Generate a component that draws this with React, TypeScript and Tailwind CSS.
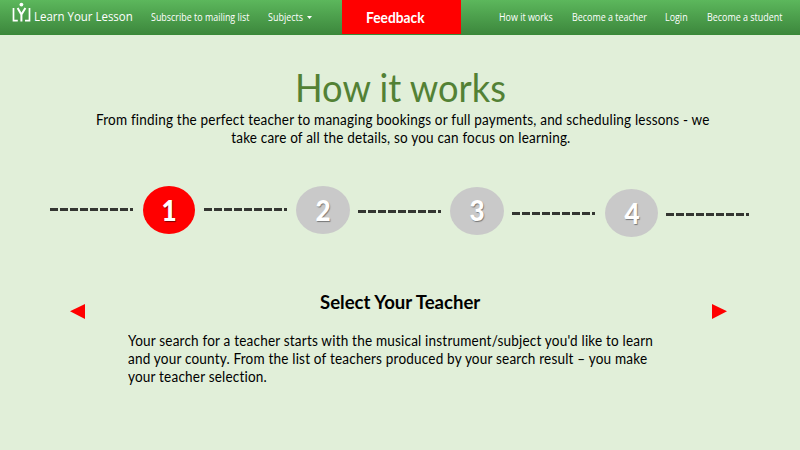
import React from "react";

const lato = "font-['Lato','Liberation_Sans',sans-serif]";

function Logo() {
  return (
    <svg className="h-[24px] w-[20px] shrink-0" viewBox="0 0 20 24" fill="none" stroke="white">
      <path d="M2.500 8V20.700H6.800" strokeWidth="1.700" />
      <path d="M18.500 8V20.700H14" strokeWidth="1.700" />
      <path d="M6.600 8L10.400 14.500L14.400 8M10.400 14V21.500" strokeWidth="2" />
      <circle cx="10.400" cy="4.600" r="1.900" fill="white" stroke="none" />
    </svg>
  );
}

function Dashes({ className }: { className: string }) {
  return (
    <div className={`flex h-[3px] w-[84px] shrink-0 gap-[2px] ${className}`}>
      {Array.from({ length: 8 }, (_, i) => (
        <span key={i} className="h-[3px] w-[8px] shrink-0 bg-[#343632]" />
      ))}
      <span className="h-[3px] w-[3px] shrink-0 bg-[#343632]" />
    </div>
  );
}

function Step({ n, className }: { n: number; className: string }) {
  return (
    <div className={`flex h-[48px] shrink-0 items-center justify-center rounded-[50%] pt-px text-[27.500px] leading-none font-black text-white ${className}`}>
      <span className="scale-x-[0.95]">{n}</span>
    </div>
  );
}

export default function App() {
  return (
    <div className={`h-[450px] w-[800px] overflow-hidden bg-[#e1efd9] text-black [font-variant-ligatures:none] ${lato}`}>
      <nav className="flex h-[35px] items-start border-b border-[#398a39] bg-linear-to-b from-[#5cb75c] to-[#3d883d] font-['Open_Sans','Noto_Sans',sans-serif] text-[10.500px] leading-[14px] whitespace-nowrap text-white">
        <div className="ml-[11px] flex w-[140px] gap-[3px]">
          <Logo />
          <span className="mt-[9px] w-[107px] origin-left scale-x-[0.917] text-[12.500px] leading-[16px]">Learn Your Lesson</span>
        </div>
        <span className="mt-[10px] w-[117px]"><span className="inline-block origin-left scale-x-[0.85]">Subscribe to mailing list</span></span>
        <span className="mt-[10px] flex w-[74px] items-center gap-[3px]">
          <span className="w-[36px]"><span className="inline-block origin-left scale-x-[0.856]">Subjects</span></span>
          <svg className="mt-[1px] h-[3px] w-[5px]" viewBox="0 0 5 3"><path d="M0 0H5L2.500 3Z" fill="white" /></svg>
        </span>
        <div className={`h-[34px] w-[119px] bg-[#ff0000] pt-[10px] pl-[24px] text-[14.500px] leading-[16px] font-bold ${lato}`}>
          <span className="inline-block origin-left scale-x-[0.95]">Feedback</span>
        </div>
        <span className="mt-[10px] ml-[38px] w-[73px]"><span className="inline-block origin-left scale-x-[0.85]">How it works</span></span>
        <span className="mt-[10px] w-[93px]"><span className="inline-block origin-left scale-x-[0.85]">Become a teacher</span></span>
        <span className="mt-[10px] w-[42px]"><span className="inline-block origin-left scale-x-[0.85]">Login</span></span>
        <span className="mt-[10px]"><span className="inline-block origin-left scale-x-[0.85]">Become a student</span></span>
      </nav>

      <header className="flex flex-col items-center pt-[30px] whitespace-nowrap">
        <h1 className="scale-x-[0.955] text-[38px] leading-[44px] text-[#538135]">How it works</h1>
        <p className="mt-[2px] ml-[6px] flex flex-col items-center text-[14.500px] leading-[18px] tracking-[0.2px]">
          <span className="scale-x-[0.933]">From finding the perfect teacher to managing bookings or full payments, and scheduling lessons - we</span>
          <span className="-ml-[4px] scale-x-[0.933]">take care of all the details, so you can focus on learning.</span>
        </p>
      </header>

      <div className="mt-[39px] ml-[49.500px] flex items-start">
        <Dashes className="mt-[22px]" />
        <Step n={1} className="ml-[9px] w-[52px] bg-[#ff0000] [text-shadow:1px_1px_1px_#7a0000]" />
        <Dashes className="mt-[22px] ml-[9px]" />
        <Step n={2} className="ml-[8.500px] w-[54px] bg-[#c9c9c9] [text-shadow:1px_1px_1px_#777]" />
        <Dashes className="mt-[24px] ml-[7.500px]" />
        <Step n={3} className="mt-[0.500px] ml-[8.500px] w-[54px] bg-[#c9c9c9] [text-shadow:1px_1px_1px_#777]" />
        <Dashes className="mt-[26px] ml-[8px]" />
        <Step n={4} className="mt-[3px] ml-[9px] w-[53px] bg-[#c9c9c9] [text-shadow:1px_1px_1px_#777]" />
        <Dashes className="mt-[27px] ml-[8px]" />
      </div>

      <main className="mt-[52px] flex items-start pl-[70px]">
        <svg className="mt-[15px] h-[15px] w-[15px] shrink-0" viewBox="0 0 15 15"><path d="M0 7.300L15 0V15Z" fill="#ff0000" /></svg>
        <section className="mt-px ml-[43px] w-[545px] whitespace-nowrap">
          <h2 className="ml-[192px] text-[19px] leading-[24px] font-bold"><span className="inline-block origin-left scale-x-[0.977]">Select Your Teacher</span></h2>
          <p className="mt-[18px] flex flex-col items-start text-[14.500px] leading-[18px] tracking-[0.2px]">
            <span className="origin-left scale-x-[0.935]">Your search for a teacher starts with the musical instrument/subject you'd like to learn</span>
            <span className="origin-left scale-x-[0.935]">and your county. From the list of teachers produced by your search result – you make</span>
            <span className="origin-left scale-x-[0.935]">your teacher selection.</span>
          </p>
        </section>
        <svg className="mt-[15px] ml-[39px] h-[15px] w-[15px] shrink-0" viewBox="0 0 15 15"><path d="M0 0L15 7.300L0 15Z" fill="#ff0000" /></svg>
      </main>
    </div>
  );
}
